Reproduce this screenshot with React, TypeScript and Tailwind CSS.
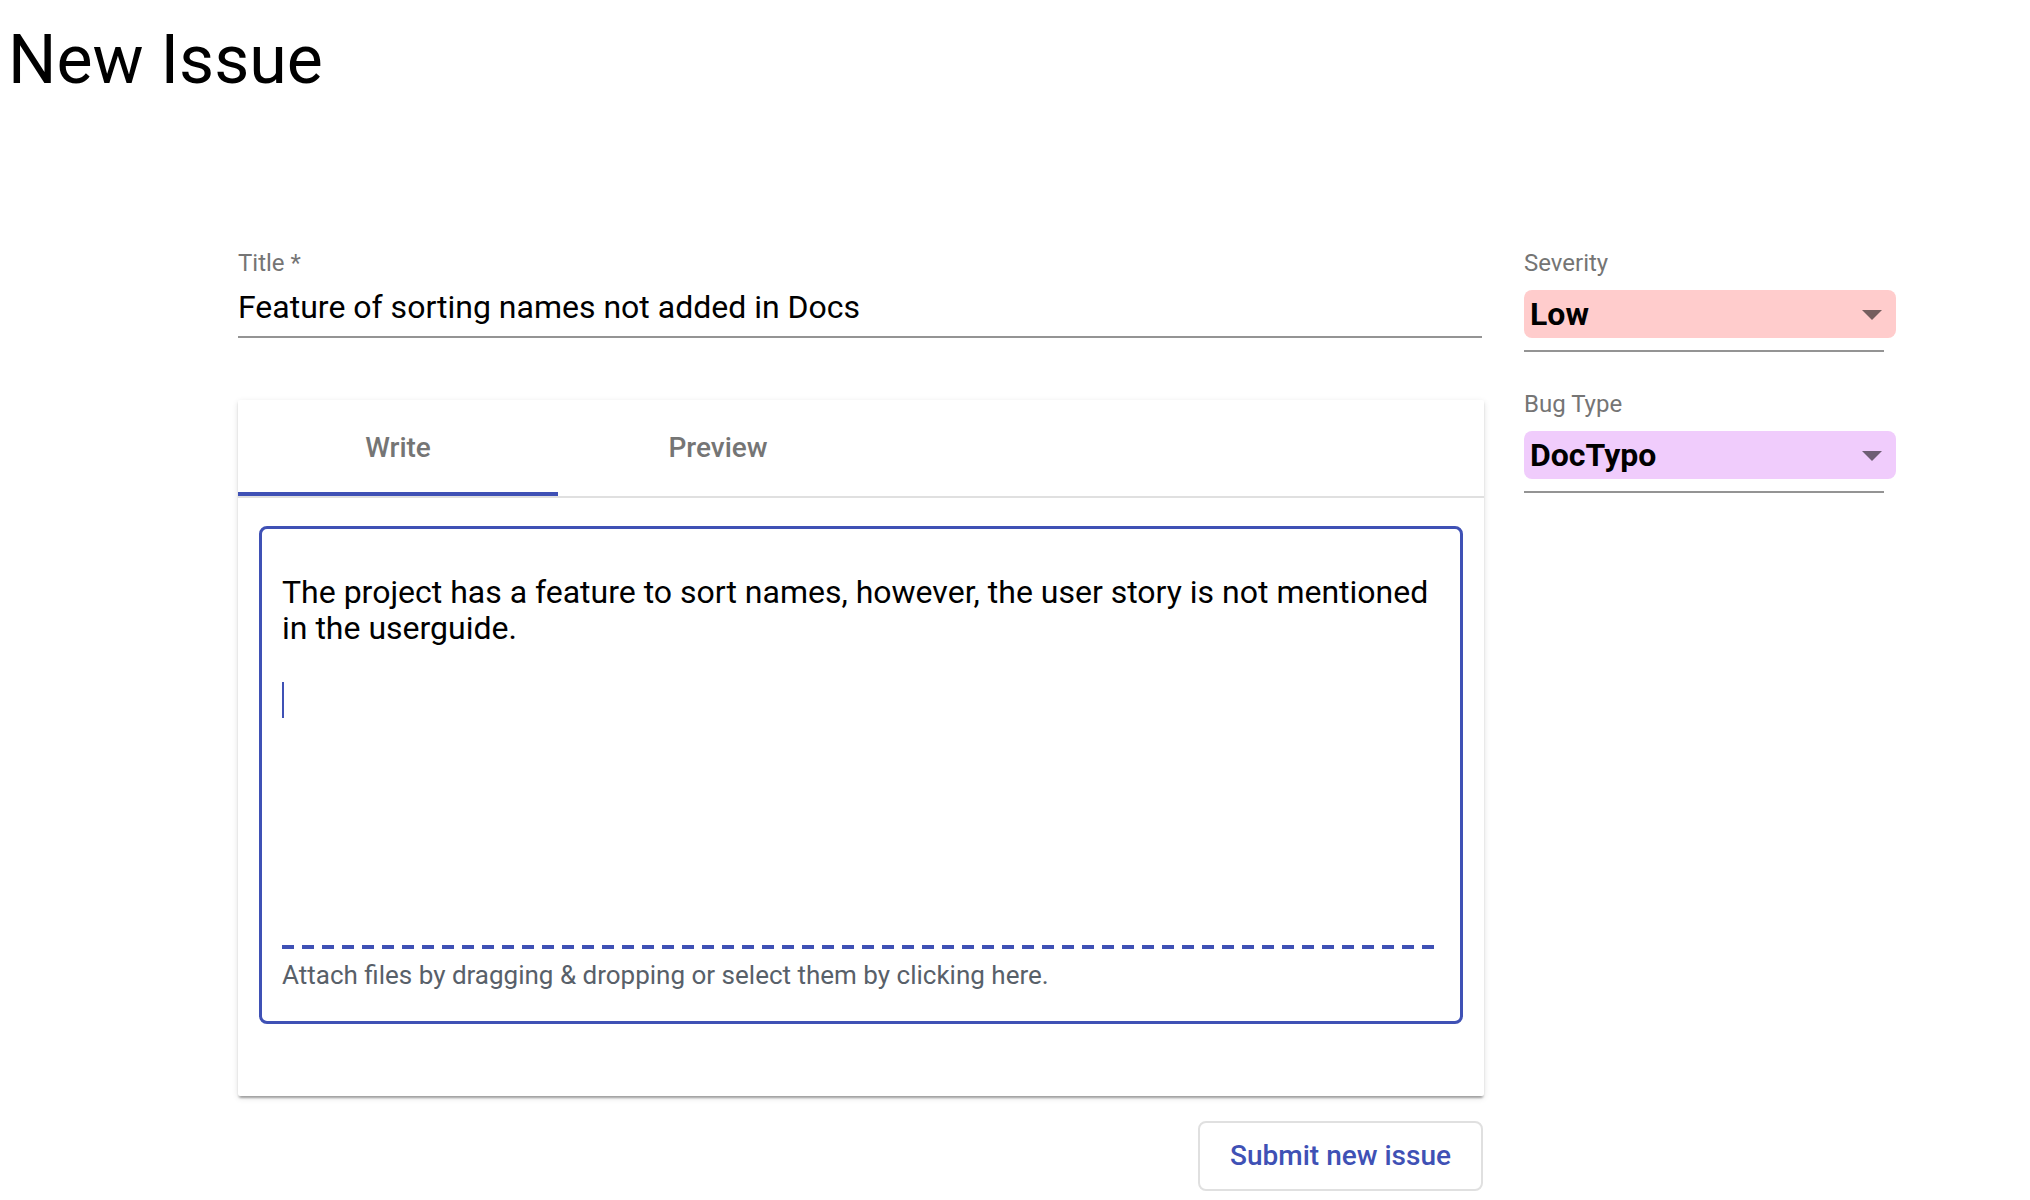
import React from "react";

function ArrowDrop() {
  return (
    <svg width="48" height="48" viewBox="0 0 24 24" className="absolute right-0 top-0 fill-[rgba(0,0,0,0.54)]">
      <path d="M7 10l5 5 5-5z" />
    </svg>
  );
}

function SelectField({ label, value, bg }: { label: string; value: string; bg: string }) {
  return (
    <div className="flex flex-col w-[372px]">
      <div className="text-[24px] leading-[24px] text-[#757575]">{label}</div>
      <div className={`relative mt-[15px] h-[48px] rounded-[8px] ${bg} flex items-center pl-[6px]`}>
        <span className="text-[32px] font-bold text-black leading-none">{value}</span>
        <ArrowDrop />
      </div>
      <div className="mt-[12px] h-[2px] w-[360px] bg-[#949494]" />
    </div>
  );
}

export default function App() {
  return (
    <div className="min-h-[1200px] bg-white font-['Roboto',sans-serif] text-black">
      <h1 className="pl-[8px] pt-[26px] text-[68px] leading-none font-normal">New Issue</h1>

      <div className="mt-[157px] pl-[238px] flex gap-[40px]">
        {/* left column */}
        <div className="w-[1246px] flex flex-col">
          <div className="w-[1244px]">
            <div className="text-[24px] leading-[24px] text-[#757575]">Title *</div>
            <div className="mt-[13px] pb-[10px] border-b-2 border-[#949494] text-[32px] leading-[38px] text-black">
              Feature of sorting names not added in Docs
            </div>
          </div>

          <div className="mt-[62px] h-[696px] bg-white rounded-[2px] shadow-[0_4px_2px_-2px_rgba(0,0,0,0.2),0_2px_2px_0_rgba(0,0,0,0.14),0_2px_6px_0_rgba(0,0,0,0.12)] flex flex-col">
            <div className="flex border-b-2 border-[#e0e0e0]">
              <div className="relative w-[320px] h-[96px] flex items-center justify-center text-[28px] font-medium text-[#757575]">
                Write
                <div className="absolute left-0 right-0 bottom-0 h-[4px] bg-[#3f51b5]" />
              </div>
              <div className="w-[320px] h-[96px] flex items-center justify-center text-[28px] font-medium text-[#757575]">
                Preview
              </div>
            </div>

            <div className="mx-[21px] mt-[28px] h-[498px] border-[3px] border-[#3f51b5] rounded-[8px] flex flex-col">
              <div className="h-[416px] pl-[20px] pr-[10px] pt-[45px] text-[32px] leading-[36px] text-black">
                <div className="whitespace-nowrap">The project has a feature to sort names, however, the user story is not mentioned</div>
                <div>in the userguide.</div>
                <div className="h-[36px]" />
                <div className="h-[36px] flex items-center">
                  <div className="w-[2px] h-[36px] bg-[#3f51b5]" />
                </div>
              </div>
              <div className="ml-[20px] mr-[19px] h-[4px] bg-[repeating-linear-gradient(to_right,#3f51b5_0px,#3f51b5_12px,transparent_12px,transparent_20px)]" />
              <div className="pl-[20px] pt-[13px] text-[26px] leading-[26px] text-[#586069]">
                Attach files by dragging &amp; dropping or select them by clicking here.
              </div>
            </div>
          </div>

          <div className="mt-[25px] flex justify-end pr-[1px]">
            <button className="h-[70px] px-[30px] border-2 border-[#e0e0e0] rounded-[8px] bg-white text-[28px] font-medium text-[#3f51b5]">
              Submit new issue
            </button>
          </div>
        </div>

        {/* right column */}
        <div className="flex flex-col gap-[40px]">
          <SelectField label="Severity" value="Low" bg="bg-[#ffcccc]" />
          <SelectField label="Bug Type" value="DocTypo" bg="bg-[#f0ccfc]" />
        </div>
      </div>
    </div>
  );
}
